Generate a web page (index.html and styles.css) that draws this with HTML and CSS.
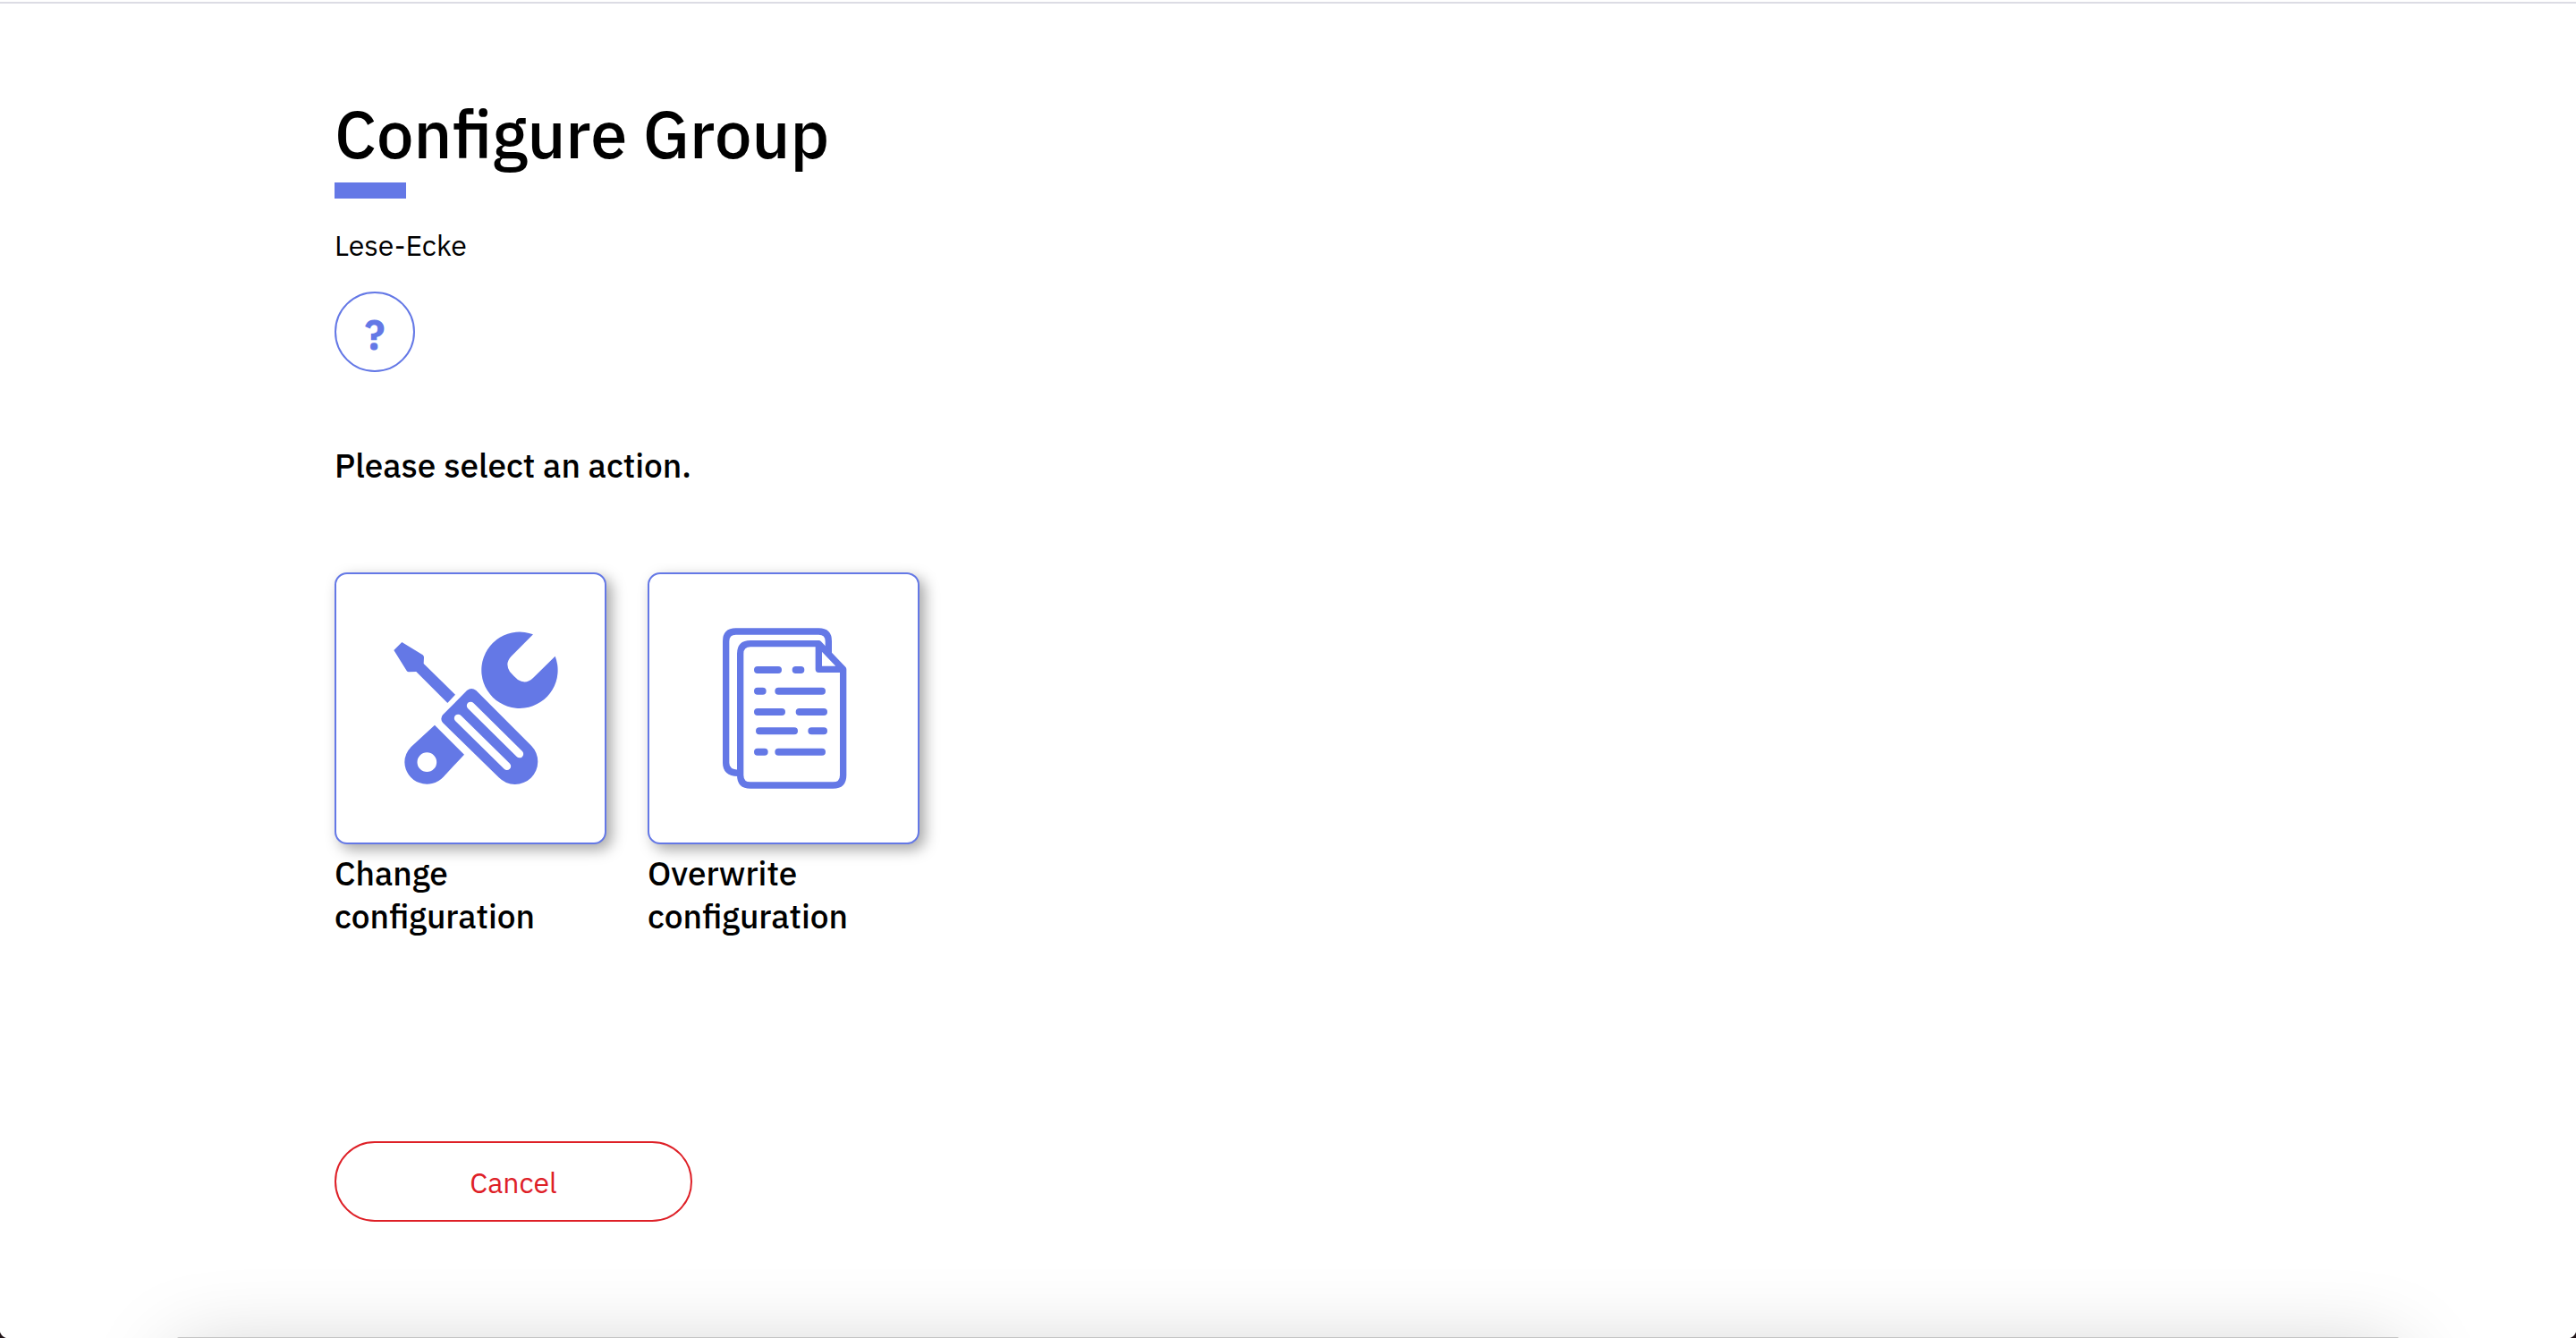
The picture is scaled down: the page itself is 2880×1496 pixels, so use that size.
FILE: index.html
```
<!DOCTYPE html>
<html lang="en">
<head>
<meta charset="utf-8">
<meta name="viewport" content="width=device-width, initial-scale=1">
<title>Configure Group</title>
<link rel="stylesheet" href="styles.css">
</head>
<body>
<main class="page">
  <header class="page-header">
    <h1 class="title">Configure Group</h1>
    <p class="group-name">Lese-Ecke</p>
    <button class="help" type="button" aria-label="Help">?</button>
  </header>
  <h2 class="prompt">Please select an action.</h2>
  <div class="actions">
    <button class="action" type="button">
      <span class="card">
        <svg class="icon" viewBox="48 66 900 900" aria-hidden="true">
          <g fill="currentColor">
            <path d="M268 294L338 337Q342 340 342 345L341 366L447 470L421 498L316 393L291 394Q287 394 284 390L241 321Z"/>
            <path d="M708 268L635 341Q612 365 630 393Q643 408 657 420Q684 437 708 414L782 341A128 128 0 1 1 708 268Z"/>
            <path fill-rule="evenodd" d="M378 572L477 671L407 746A75 75 0 0 1 277 697Q277 668 299 645ZM352 664A32.500 32.500 0 1 0 352 729A32.500 32.500 0 1 0 352 664Z"/>
            <path fill-rule="evenodd" d="M486 456Q501 444 517 456L702 641A76 76 0 0 1 593 748L405 564Q395 551 405 538ZM508 498A13 13 0 0 0 489 516L653 678A13 13 0 0 0 672 660ZM466 540A13 13 0 0 0 447 558L611 719A13 13 0 0 0 630 701Z"/>
          </g>
        </svg>
      </span>
      <span class="label">Change configuration</span>
    </button>
    <button class="action" type="button">
      <span class="card">
        <svg class="icon" viewBox="48 66 900 900" aria-hidden="true">
          <g fill="none" stroke="currentColor" stroke-width="22" stroke-linejoin="round">
            <path d="M649 334V291Q649 258 616 258H338Q305 258 305 291V699Q305 732 345 733"/>
            <path d="M616 299H387Q353 299 353 333V740Q353 774 387 774H664Q698 774 698 740V385ZM616 299V385H698"/>
            <path stroke-width="24" stroke-linecap="round" d="M411 387H480M539 387H556M411 458H428M481 458H627M411 528H492M551 528H633M417 592H534M592 592H633M411 662H434M481 662H627"/>
          </g>
        </svg>
      </span>
      <span class="label">Overwrite configuration</span>
    </button>
  </div>
  <button class="cancel" type="button">Cancel</button>
</main>
<div class="window-edge" aria-hidden="true"></div>
</body>
</html>
```
FILE: styles.css
```
:root {
  --accent: #6478e6;
  --danger: #de2027;
}

* {
  box-sizing: border-box;
}

body {
  margin: 0;
  min-height: 100vh;
  padding-top: 2px;
  background: #fff;
  color: #000;
  font-family: "IBM Plex Sans", Roboto, "Noto Sans", sans-serif;
  font-size: 32px;
  line-height: 48px;
  overflow-x: hidden;
}

button {
  margin: 0;
  padding: 0;
  border: 0;
  background: none;
  color: inherit;
  font: inherit;
  cursor: pointer;
}

.page {
  display: flex;
  flex-direction: column;
  align-items: flex-start;
  padding: 100px calc((100% - 2132px) / 2) 0;
  border-top: 2px solid #dcdce4;
}

.page-header {
  display: flex;
  flex-direction: column;
  align-items: flex-start;
}

.title {
  margin: 0;
  font-size: 74px;
  font-weight: 500;
  line-height: 90px;
}

.title::after {
  content: "";
  display: block;
  width: 80px;
  height: 18px;
  margin-top: 10px;
  background: var(--accent);
}

.group-name {
  margin: 28px 0;
}

.help {
  width: 90px;
  height: 90px;
  padding-top: 6px;
  border: 2px solid var(--accent);
  border-radius: 50%;
  color: var(--accent);
  font-size: 46px;
  font-weight: 700;
}

.prompt {
  margin: 80px 0 96px;
  font-size: 37px;
  font-weight: 500;
  line-height: 48px;
}

.actions {
  display: flex;
  flex-wrap: wrap;
  gap: 46px;
}

.action {
  display: flex;
  flex-direction: column;
  gap: 8px;
  width: 304px;
  font-size: 37px;
  font-weight: 500;
  text-align: left;
}

.card {
  display: block;
  border: 2px solid var(--accent);
  border-radius: 14px;
  background: #fff;
  box-shadow: 6px 6px 16px rgba(0, 0, 0, 0.35);
  color: var(--accent);
}

.icon {
  display: block;
  width: 100%;
  height: auto;
}

.cancel {
  width: 400px;
  height: 90px;
  margin-top: 228px;
  padding-top: 2px;
  border: 2px solid var(--danger);
  border-radius: 45px;
  color: var(--danger);
}

/* Rounded window corners and the shadow of the panel docked below */
.window-edge {
  position: fixed;
  inset: auto 0 0;
  height: 120px;
  overflow: hidden;
  pointer-events: none;
  background:
    radial-gradient(circle at 10px 0, transparent 10px, #211519 11px) left bottom / 10px 10px no-repeat,
    radial-gradient(circle at 0 0, transparent 10px, #211519 11px) right bottom / 10px 10px no-repeat;
}

.window-edge::after {
  content: "";
  position: absolute;
  top: 119px;
  left: 198px;
  right: 198px;
  height: 200px;
  border-radius: 2px;
  background: #c4c4c4;
  box-shadow: 0 20px 96px rgba(0, 0, 0, 0.22);
}
```
